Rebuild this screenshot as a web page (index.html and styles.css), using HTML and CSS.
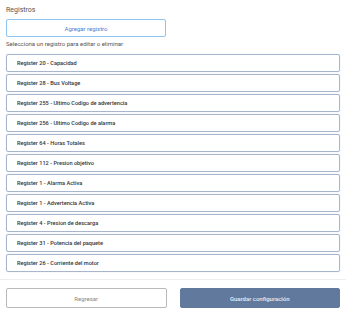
FILE: index.html
```html
<html>
	<head>
	<link rel="stylesheet" href="styles.css">
	</head>
	<body>
		<div class="page">
			<div class="title">Registros</div>
			<button type="button" class="add-btn">Agregar registro</button>
			<div class="hint">Selecciona un registro para editar o eliminar</div>
			<ul class="reg-list">
				<li>Register 20 - Capacidad</li>
				<li>Register 28 - Bus Voltage</li>
				<li>Register 255 - Ultimo Codigo de advertencia</li>
				<li>Register 256 - Ultimo Codigo de alarma</li>
				<li>Register 64 - Horas Totales</li>
				<li>Register 112 - Presion objetivo</li>
				<li>Register 1 - Alarma Activa</li>
				<li>Register 1 - Advertencia Activa</li>
				<li>Register 4 - Presion de descarga</li>
				<li>Register 31 - Potencia del paquete</li>
				<li>Register 26 - Corriente del motor</li>
			</ul>
		</div>
		<div class="footer">
			<button type="button" class="back-btn">Regresar</button>
			<button type="button" class="save-btn">Guardar configuración</button>
		</div>
	</body>
</html>
```

FILE: styles.css
```css
*{
	margin: 0px;
	padding: 0px;
	box-sizing: border-box;
}
body{
	background: white;
	font-family: Roboto, "Liberation Sans", sans-serif;
	color: #333333;
}
.page{
	padding: 5px 6px 0px 6px;
}
.title{
	font-size: 7px;
	line-height: 10px;
	color: #555555;
}
.add-btn{
	display: block;
	width: 160px;
	height: 18px;
	margin-top: 4px;
	background: white;
	border: 1px solid #8cc4f6;
	border-radius: 2px;
	color: #3f7fd6;
	font-family: inherit;
	font-size: 6px;
}
.hint{
	font-size: 6px;
	line-height: 8px;
	color: #555555;
	margin-top: 3px;
}
.reg-list{
	list-style-type: none;
	margin-top: 6px;
	display: flex;
	flex-direction: column;
	gap: 2px;
}
.reg-list li{
	height: 18px;
	line-height: 16px;
	padding-left: 10px;
	border: 1px solid #a8b6cd;
	border-radius: 2px;
	box-shadow: 0px 0px 1px #c3cddd;
	font-size: 5.6px;
	font-weight: 500;
	color: #333333;
}
.footer{
	margin-top: 7px;
	border-top: 1px solid #eeeeee;
	padding: 8px 6px 0px 6px;
	display: flex;
	gap: 13px;
}
.footer button{
	flex: 1;
	height: 20px;
	border-radius: 2px;
	font-family: inherit;
	font-size: 6px;
}
.back-btn{
	background: white;
	border: 1px solid #b9b9b9;
	color: #888888;
}
.save-btn{
	background: #61799c;
	border: 1px solid #61799c;
	color: #e8edf5;
	font-weight: 500;
}
```
